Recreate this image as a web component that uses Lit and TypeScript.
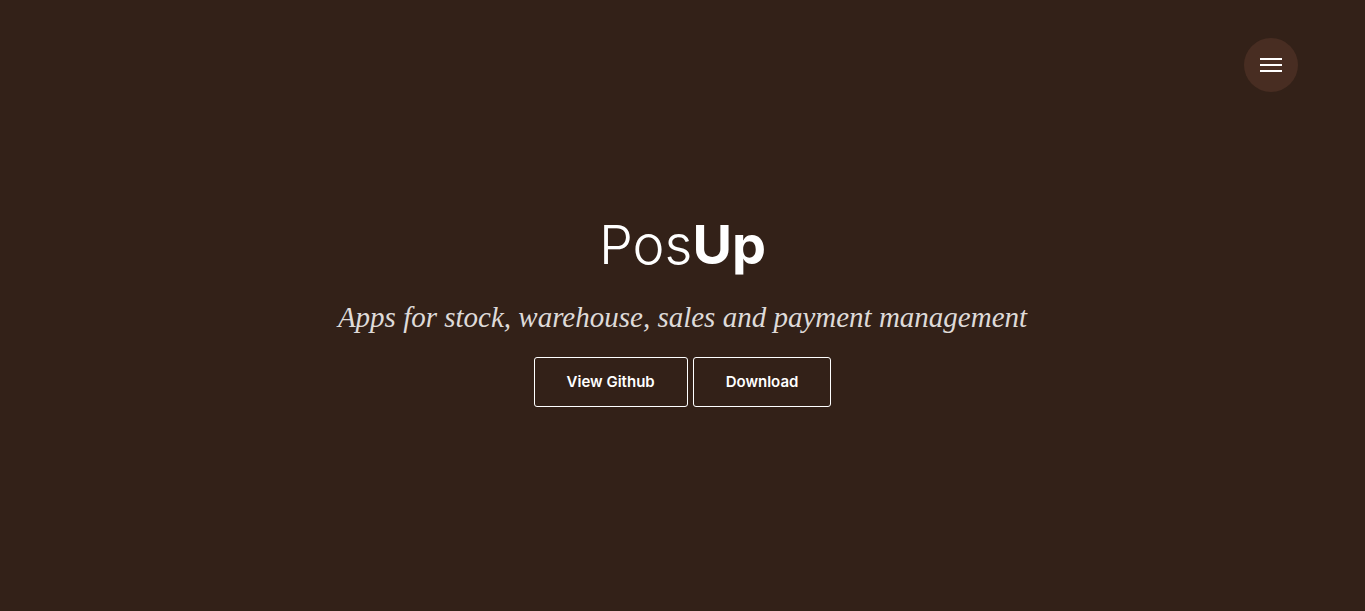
import { LitElement, html, css } from "lit";
import { customElement, state } from "lit/decorators.js";

@customElement("app-root")
export class AppRoot extends LitElement {
  static styles = css`
    :host {
      display: block;
      background: #332118;
      color: #fff;
    }
    .hero {
      box-sizing: border-box;
      min-height: 100vh;
      display: flex;
      flex-direction: column;
      align-items: center;
      justify-content: center;
      padding: 16px 16px 8px;
      text-align: center;
    }
    .menu {
      position: absolute;
      top: 38px;
      right: 67px;
      width: 54px;
      height: 54px;
      padding: 0;
      border: 0;
      border-radius: 50%;
      background: #482d22;
      display: flex;
      align-items: center;
      justify-content: center;
      cursor: pointer;
    }
    .title {
      margin: 0;
      font: 300 54px/64px Inter, sans-serif;
    }
    .title strong {
      font-weight: 700;
    }
    .tagline {
      margin: 24px 0;
      font: italic 29px/32px Georgia, "Liberation Serif", serif;
      color: #dedad8;
    }
    .actions {
      display: flex;
      flex-wrap: wrap;
      justify-content: center;
      gap: 5px;
    }
    .action {
      padding: 12px 32px;
      border: 1px solid #fff;
      border-radius: 3px;
      color: #fff;
      font: 600 15px/24px Inter, sans-serif;
      text-decoration: none;
    }
  `;

  @state() private open = false;

  render() {
    return html`
      <button
        class="menu"
        aria-label="Menu"
        aria-expanded=${this.open ? "true" : "false"}
        @click=${() => (this.open = !this.open)}
      >
        <svg width="22" height="14" viewBox="0 0 22 14" aria-hidden="true">
          <path d="M0 1h22M0 7h22M0 13h22" stroke="#fff" stroke-width="2" />
        </svg>
      </button>
      <main class="hero">
        <h1 class="title">Pos<strong>Up</strong></h1>
        <p class="tagline">Apps for stock, warehouse, sales and payment management</p>
        <nav class="actions">
          <a class="action" href="#github">View Github</a>
          <a class="action" href="#download">Download</a>
        </nav>
      </main>
    `;
  }
}
